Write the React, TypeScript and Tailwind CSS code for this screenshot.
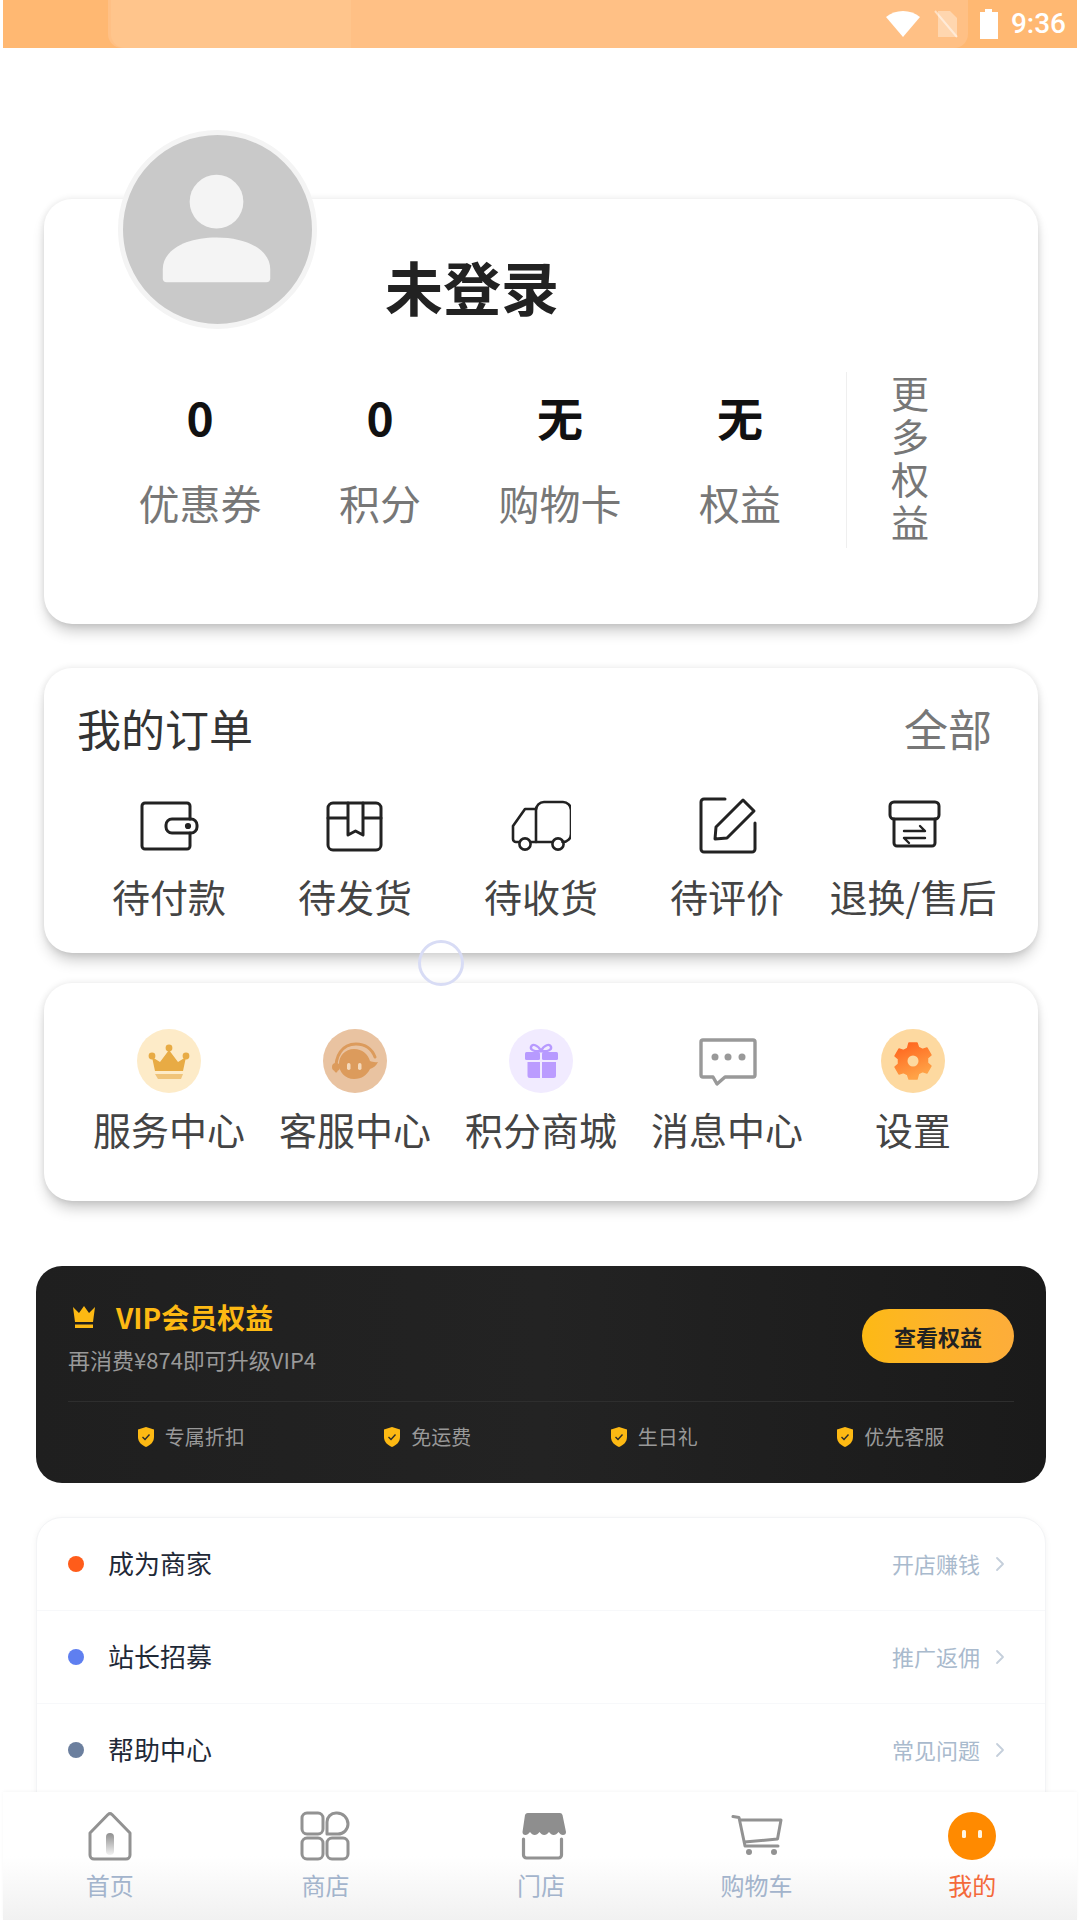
import type { ReactNode } from 'react';
import { ChevronRight } from 'lucide-react';

const stats = [
  { value: '0', label: '优惠券' },
  { value: '0', label: '积分' },
  { value: '无', label: '购物卡' },
  { value: '无', label: '权益' },
];

function OrderIcon({ children }: { children: ReactNode }) {
  return (
    <svg viewBox="0 0 60 60" className="h-[60px] w-[60px]" fill="none" stroke="#222" strokeWidth="3" strokeLinecap="round" strokeLinejoin="round">
      {children}
    </svg>
  );
}

const orders = [
  {
    label: '待付款',
    icon: (
      <OrderIcon>
        <path d="M51 24V11a3 3 0 0 0-3-3H6a3 3 0 0 0-3 3v40a3 3 0 0 0 3 3h42a3 3 0 0 0 3-3V38" />
        <rect x="27" y="24" width="31" height="14" rx="6" />
        <circle cx="49" cy="31" r="1.6" fill="#222" />
      </OrderIcon>
    ),
  },
  {
    label: '待发货',
    icon: (
      <OrderIcon>
        <rect x="3" y="8" width="53" height="47" rx="5" />
        <path d="M3 23h20M38 23h18M23 8v32l7.5-4 7.5 4V8" />
      </OrderIcon>
    ),
  },
  {
    label: '待收货',
    icon: (
      <OrderIcon>
        <path d="M25 47V15a8 8 0 0 1 8-8h19a8 8 0 0 1 8 8v24a8 8 0 0 1-8 8h-0.5" strokeWidth="2.6" />
        <path d="M25 14H14L2 31v13a3 3 0 0 0 3 3h3M20 47h21" strokeWidth="2.6" />
        <circle cx="14" cy="49" r="5.6" strokeWidth="2.6" />
        <circle cx="47" cy="49" r="5.6" strokeWidth="2.6" />
      </OrderIcon>
    ),
  },
  {
    label: '待评价',
    icon: (
      <OrderIcon>
        <path d="M28 4H7a3 3 0 0 0-3 3v47a3 3 0 0 0 3 3h48a3 3 0 0 0 3-3V28" />
        <path d="M46 5l11 11-27 27-12 1 1-12z" />
      </OrderIcon>
    ),
  },
  {
    label: '退换/售后',
    icon: (
      <OrderIcon>
        <rect x="7" y="7" width="49" height="17" rx="4" />
        <path d="M11 24v24a3 3 0 0 0 3 3h35a3 3 0 0 0 3-3V24" />
        <path d="M21 36h21l-5-5M42 43H21l5 5" strokeWidth="2.4" />
      </OrderIcon>
    ),
  },
];

const services = [
  {
    label: '服务中心',
    icon: (
      <svg viewBox="0 0 64 64" className="h-16 w-16">
        <circle cx="32" cy="32" r="32" fill="#fdebc8" />
        <path d="M18 42l-3-14 8 5 9-12 9 12 8-5-3 14z" fill="#e8ab44" />
        <circle cx="15" cy="27" r="3.4" fill="#e8ab44" />
        <circle cx="32" cy="19" r="3.4" fill="#e8ab44" />
        <circle cx="49" cy="27" r="3.4" fill="#e8ab44" />
        <path d="M18 45h28l-2 5H21z" fill="#f0c47a" />
      </svg>
    ),
  },
  {
    label: '客服中心',
    icon: (
      <svg viewBox="0 0 64 64" className="h-16 w-16">
        <circle cx="32" cy="32" r="32" fill="#e9c3a1" />
        <path d="M31 20c8.500 0 14 5 16 12 2 1 5 1.500 8 1-2 4-5 6-8 7-3 6-8 10-16 10-9 0-15-7-15-15s6-15 15-15z" fill="#dc9b5c" />
        <path d="M13 42c-1-15 6-27 20-27 9 0 16 5 19 13" fill="none" stroke="#dc9b5c" strokeWidth="3" strokeLinecap="round" />
        <circle cx="13" cy="38" r="4" fill="#dc9b5c" />
        <rect x="24" y="34" width="3.500" height="7" rx="1.700" fill="#f4d9bb" />
        <rect x="35" y="34" width="3.500" height="7" rx="1.700" fill="#f4d9bb" />
      </svg>
    ),
  },
  {
    label: '积分商城',
    icon: (
      <svg viewBox="0 0 64 64" className="h-16 w-16">
        <circle cx="32" cy="32" r="32" fill="#f1ebff" />
        <path d="M32 22c-3-6-9-8-10-4-1 3 4 5 10 4zm0 0c3-6 9-8 10-4 1 3-4 5-10 4z" fill="none" stroke="#b79aff" strokeWidth="2.400" />
        <rect x="16" y="23" width="15" height="8" rx="1.500" fill="#b79aff" />
        <rect x="33" y="23" width="16" height="8" rx="1.500" fill="#b79aff" />
        <path d="M18.500 33H31v16H21a2.500 2.500 0 0 1-2.500-2.500zM33 33h14v13.500a2.500 2.500 0 0 1-2.500 2.500H33z" fill="#bb9cff" />
      </svg>
    ),
  },
  {
    label: '消息中心',
    icon: (
      <svg viewBox="0 0 64 64" className="h-16 w-16">
        <path d="M8 11h50a2 2 0 0 1 2 2v33a2 2 0 0 1-2 2H30l-8 7-4-7H8a2 2 0 0 1-2-2V13a2 2 0 0 1 2-2z" fill="none" stroke="#999" strokeWidth="3.400" strokeLinejoin="round" />
        <circle cx="20" cy="28" r="3.500" fill="#999" />
        <circle cx="33" cy="28" r="3.500" fill="#999" />
        <circle cx="47" cy="28" r="3.500" fill="#999" />
      </svg>
    ),
  },
  {
    label: '设置',
    icon: (
      <svg viewBox="0 0 64 64" className="h-16 w-16">
        <defs>
          <linearGradient id="gearFill" x1="0" y1="0" x2="0.4" y2="1">
            <stop offset="0" stopColor="#ff5f1a" />
            <stop offset="1" stopColor="#ffa246" />
          </linearGradient>
        </defs>
        <circle cx="32" cy="32" r="32" fill="#fdd9a0" />
        <path
          d="M28 14h8l1.500 4.500 4 2 4.500-1.500 4 7-3.500 3v5l3.500 3-4 7-4.500-1.500-4 2L36 50h-8l-1.500-4.500-4-2-4.500 1.500-4-7 3.500-3v-5l-3.500-3 4-7 4.500 1.500 4-2z"
          fill="url(#gearFill)"
          stroke="url(#gearFill)"
          strokeWidth="1.500"
          strokeLinejoin="round"
        />
        <circle cx="32" cy="32" r="5.500" fill="#fdd9a0" />
      </svg>
    ),
  },
];

const perks = ['专属折扣', '免运费', '生日礼', '优先客服'];

const links = [
  { label: '成为商家', hint: '开店赚钱', dot: 'bg-[#ff5c1a]' },
  { label: '站长招募', hint: '推广返佣', dot: 'bg-[#5f7ff0]' },
  { label: '帮助中心', hint: '常见问题', dot: 'bg-[#6b7f9e]' },
];

function TabIcon({ children }: { children: ReactNode }) {
  return (
    <svg viewBox="0 0 60 60" className="h-[60px] w-[60px]" fill="none" stroke="#929292" strokeWidth="3" strokeLinecap="round" strokeLinejoin="round">
      {children}
    </svg>
  );
}

const tabs = [
  {
    label: '首页',
    icon: (
      <TabIcon>
        <defs>
          <linearGradient id="homeFill" x1="0" y1="0" x2="0" y2="1">
            <stop offset="0" stopColor="#8f8f8f" />
            <stop offset="1" stopColor="#f2f2f2" />
          </linearGradient>
        </defs>
        <path d="M28 8.500a3 3 0 0 1 4 0L50 27v22a4 4 0 0 1-4 4H14a4 4 0 0 1-4-4V27z" />
        <rect x="26" y="27" width="8" height="22" rx="4" fill="url(#homeFill)" stroke="none" />
      </TabIcon>
    ),
  },
  {
    label: '商店',
    icon: (
      <TabIcon>
        <rect x="7" y="7" width="21" height="21" rx="5" />
        <path d="M32 28V16a9 9 0 0 1 9-9h1a11 11 0 0 1 11 11 10 10 0 0 1-10 10z" />
        <rect x="7" y="32" width="21" height="21" rx="5" />
        <rect x="32" y="32" width="21" height="21" rx="5" />
      </TabIcon>
    ),
  },
  {
    label: '门店',
    icon: (
      <TabIcon>
        <path
          d="M13 7h36a3 3 0 0 1 2.500 2L55 26c0 2-1 3-3 3-2 0-3-1-4.500-3-1.500 2-3 3-4.800 3s-3.200-1-4.700-3c-1.500 2-3 3-4.800 3s-3.200-1-4.700-3c-1.500 2-3 3-4.800 3s-3.200-1-4.700-3c-1.500 2-3 3-4.500 3-2 0-3-1-3-3l2.500-17a3 3 0 0 1 3-2z"
          fill="#8e8e8e"
          stroke="none"
        />
        <path d="M12.500 33v16a3 3 0 0 0 3 3h32a3 3 0 0 0 3-3V33" strokeWidth="3.200" />
      </TabIcon>
    ),
  },
  {
    label: '购物车',
    icon: (
      <TabIcon>
        <path d="M6 10.500l6 1L18 40h33" />
        <path d="M13.500 14H54l-3.500 19-33 3" />
        <circle cx="22" cy="46" r="3" fill="#929292" stroke="none" />
        <circle cx="47" cy="46" r="3" fill="#929292" stroke="none" />
      </TabIcon>
    ),
  },
  {
    label: '我的',
    active: true,
    icon: (
      <svg viewBox="0 0 60 60" className="h-[60px] w-[60px]">
        <circle cx="30" cy="30" r="24" fill="#ff8a00" />
        <rect x="20" y="24" width="4" height="8" rx="1.500" fill="#fff4e0" />
        <rect x="36" y="24" width="4" height="8" rx="1.500" fill="#fff4e0" />
      </svg>
    ),
  },
];

function StatusBar() {
  return (
    <div className="relative mx-[3px] flex h-12 shrink-0 items-center justify-end overflow-hidden bg-[#ffb872] pr-[11px]">
      <div className="absolute left-[105px] top-[-40px] h-[88px] w-[860px] rounded-b-[14px] bg-[#ffc085]" />
      <div className="absolute left-[108px] top-[-40px] h-[88px] w-[240px] rounded-bl-[14px] bg-[#ffc58c]" />
      <div className="relative flex items-center">
        <svg viewBox="0 0 36 28" className="h-7 w-9">
          <path d="M18 27L1 7c9-8 25-8 34 0z" fill="#fff" />
        </svg>
        <svg viewBox="0 0 26 28" className="ml-3 h-7 w-[26px]">
          <path d="M5 1h12l7 7v19H5z" fill="#fff" opacity="0.35" />
          <path d="M2 1l22 26" stroke="#fff" strokeWidth="2" opacity="0.5" />
        </svg>
        <svg viewBox="0 0 20 30" className="ml-5 h-[30px] w-5">
          <path d="M6 0h7v3h6v27H1V3h5z" fill="#fff" />
          <path d="M1 3h18v4H1z" fill="#fff" opacity="0.4" />
        </svg>
        <span className="ml-3 font-['Roboto',sans-serif] text-[28px] leading-none font-medium text-white">9:36</span>
      </div>
    </div>
  );
}

function ProfileCard() {
  return (
    <section className="relative ml-[44px] mr-[42px] mt-[151px] h-[425px] rounded-[28px] bg-white shadow-[0_10px_15px_-4px_rgba(0,0,0,0.24),0_0_7px_rgba(0,0,0,0.1)]">
      <div className="absolute left-[74px] top-[-69px] flex h-[199px] w-[199px] items-center justify-center rounded-full border-[5px] border-[#f4f4f4] bg-[#c9c9c9]">
        <svg viewBox="0 0 190 190" className="h-[189px] w-[189px]">
          <circle cx="94" cy="67" r="27" fill="#f4f4f4" />
          <path d="M40 135c0-20 24-32 54-32s54 12 54 32v9a4 4 0 0 1-4 4H44a4 4 0 0 1-4-4z" fill="#f4f4f4" />
        </svg>
      </div>
      <div className="pl-[341px] pt-[58px] text-[58px] leading-[58px] font-bold text-[#222]">未登录</div>
      <div className="mt-[57px] flex pl-[66px]">
        <div className="grid w-[720px] grid-cols-4">
          {stats.map((s, i) => (
            <div key={i} className="flex flex-col items-center pt-[20px]">
              <div className="text-[46px] leading-[48px] font-bold text-[#111]">{s.value}</div>
              <div className="mt-[42px] text-[41px] leading-[40px] text-[#777]">{s.label}</div>
            </div>
          ))}
        </div>
        <div className="ml-[16px] h-[176px] w-px bg-[#efefef]" />
        <div className="-mt-[2px] ml-[44px] w-[40px] text-[38px] leading-[43px] text-[#777]">更多权益</div>
      </div>
    </section>
  );
}

function OrdersCard() {
  return (
    <section className="ml-[44px] mr-[42px] mt-[44px] h-[285px] rounded-[28px] bg-white shadow-[0_10px_15px_-4px_rgba(0,0,0,0.24),0_0_7px_rgba(0,0,0,0.1)]">
      <div className="flex items-center justify-between pl-[33px] pr-[46px] pt-[38px]">
        <span className="text-[44px] leading-[44px] text-[#333]">我的订单</span>
        <span className="text-[44px] leading-[44px] text-[#777]">全部</span>
      </div>
      <div className="mx-[32px] mt-[45px] grid grid-cols-5">
        {orders.map((o, i) => (
          <div key={i} className="flex flex-col items-center">
            {o.icon}
            <div className="mt-[21px] text-[38px] leading-[40px] whitespace-nowrap text-[#444]">{o.label}</div>
          </div>
        ))}
      </div>
    </section>
  );
}

function ServicesCard() {
  return (
    <section className="ml-[44px] mr-[42px] mt-[30px] h-[218px] rounded-[28px] bg-white pt-[46px] shadow-[0_10px_15px_-4px_rgba(0,0,0,0.24),0_0_7px_rgba(0,0,0,0.1)]">
      <div className="mx-[32px] grid grid-cols-5">
        {services.map((s, i) => (
          <div key={i} className="flex flex-col items-center">
            {s.icon}
            <div className="mt-[16px] text-[38px] leading-[40px] whitespace-nowrap text-[#444]">{s.label}</div>
          </div>
        ))}
      </div>
    </section>
  );
}

function VipCard() {
  return (
    <section className="ml-[36px] mr-[34px] mt-[65px] h-[217px] rounded-[26px] bg-gradient-to-r from-[#1f1f1f] via-[#232323] to-[#1a1a1a] px-[32px] pt-[35px]">
      <div className="flex items-start justify-between">
        <div>
          <div className="flex items-center">
            <svg viewBox="0 0 24 22" className="mr-[20px] ml-[4px] h-[22px] w-6">
              <path d="M1 1l6 6 5-7 5 7 6-6-2 15H3z" fill="#fdb913" />
              <path d="M3 18.500h18V22H3z" fill="#fdb913" />
            </svg>
            <span className="text-[28px] leading-[32px] font-bold text-[#fdb913]">VIP会员权益</span>
          </div>
          <div className="mt-[10px] text-[22px] leading-[32px] text-[#999]">再消费¥874即可升级VIP4</div>
        </div>
        <div className="mt-[8px] flex h-[54px] w-[152px] items-center justify-center rounded-full bg-gradient-to-r from-[#fdb913] to-[#fdad3a] text-[22px] font-bold text-[#222]">
          查看权益
        </div>
      </div>
      <div className="mt-[26px] h-px bg-[#2e2e2e]" />
      <div className="mt-[19px] flex justify-around">
        {perks.map((p, i) => (
          <div key={i} className="flex h-8 items-center text-[20px] text-[#999]">
            <svg viewBox="0 0 16 20" className="mr-[11px] h-5 w-4">
              <path d="M8 0l8 2.500V10c0 5-3.500 8-8 10-4.500-2-8-5-8-10V2.500z" fill="#fdb913" />
              <path d="M4.500 10l2.500 2.500 4.500-5" fill="none" stroke="#2a2a2a" strokeWidth="1.400" />
            </svg>
            {p}
          </div>
        ))}
      </div>
    </section>
  );
}

function LinksCard() {
  return (
    <section className="ml-[36px] mr-[34px] mt-[34px] rounded-[26px] border border-[#f3f4f6] bg-white pb-10 shadow-[0_1px_6px_rgba(0,0,0,0.05)]">
      {links.map((l, i) => (
        <div key={i} className="flex h-[93px] items-center border-b border-[#f7f8fa] pl-[31px] pr-[33px]">
          <span className={`h-4 w-4 rounded-full ${l.dot}`} />
          <span className="ml-[24px] flex-1 pb-[4px] text-[26px] text-[#1f2937]">{l.label}</span>
          <span className="pb-[2px] text-[22px] text-[#a9bacd]">{l.hint}</span>
          <ChevronRight className="ml-2 h-6 w-6 text-[#c5cfdb]" strokeWidth={1.8} />
        </div>
      ))}
    </section>
  );
}

function TabBar() {
  return (
    <footer className="mx-[3px] h-[128px] shrink-0 bg-[linear-gradient(to_bottom,#fff_50%,#f1f1f1_100%)] shadow-[0_-1px_3px_rgba(0,0,0,0.03)]">
      <div className="-mx-[3px] grid grid-cols-5 pl-[2px] pt-[14px]">
        {tabs.map((t, i) => (
          <div key={i} className="flex flex-col items-center">
            {t.icon}
            <div className={`mt-[4px] text-[24px] leading-[30px] ${t.active ? 'text-[#f4693a]' : 'text-[#a3b4cc]'}`}>{t.label}</div>
          </div>
        ))}
      </div>
    </footer>
  );
}

export default function App() {
  return (
    <div className="relative flex h-[1920px] w-[1080px] flex-col overflow-hidden bg-white font-['Noto_Sans_CJK_SC',sans-serif]">
      <StatusBar />
      <main className="min-h-0 flex-1 overflow-hidden">
        <ProfileCard />
        <OrdersCard />
        <ServicesCard />
        <VipCard />
        <LinksCard />
      </main>
      <TabBar />
      {/* touch indicator */}
      <div className="absolute left-[418px] top-[940px] h-[46px] w-[46px] rounded-full border-[3px] border-[#d8dcf5] bg-white/30" />
    </div>
  );
}
